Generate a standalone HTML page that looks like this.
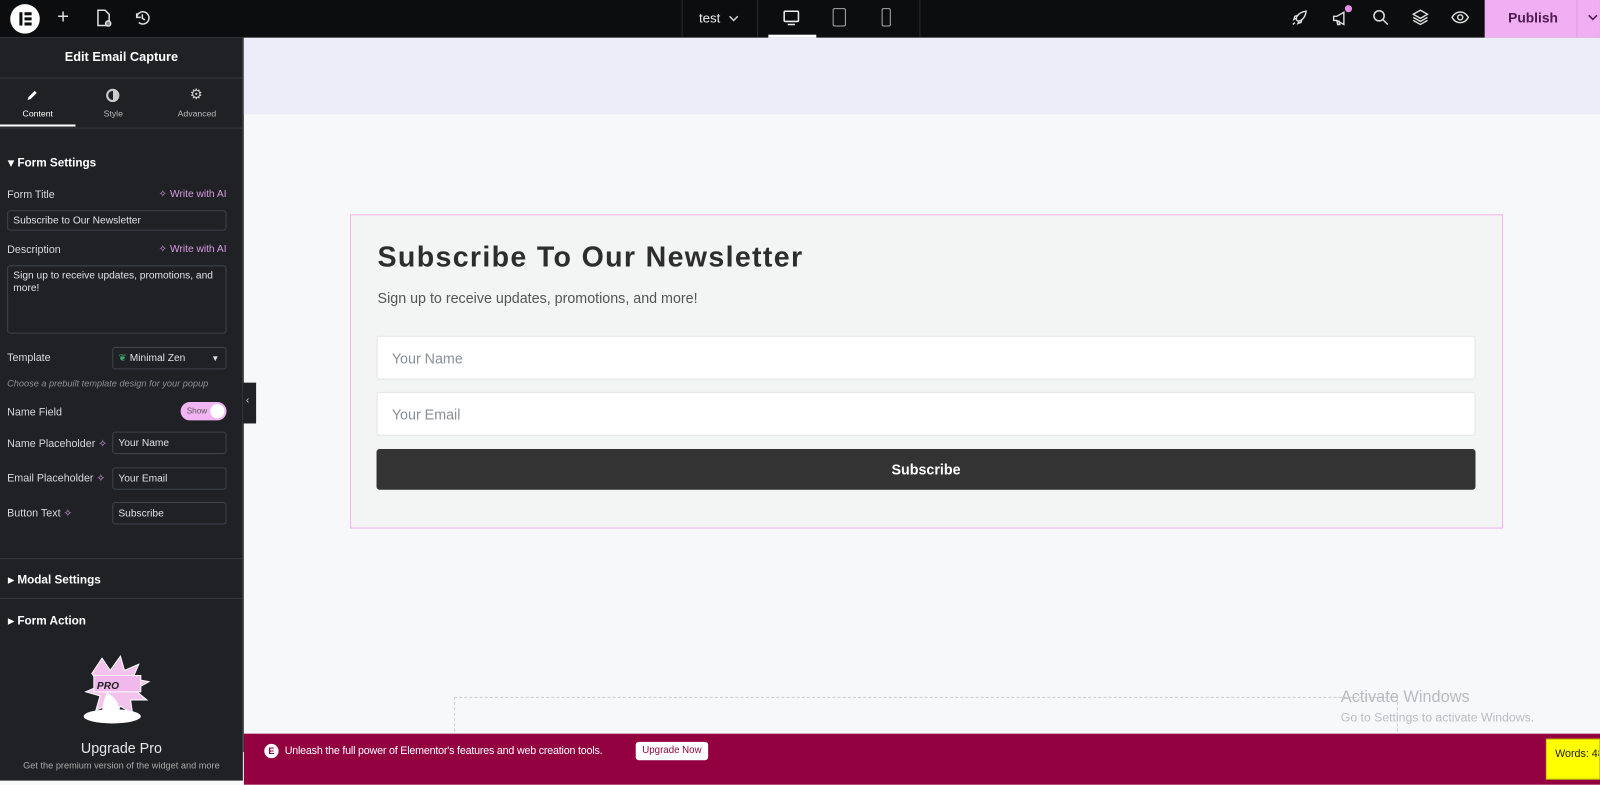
<!DOCTYPE html>
<html><head><meta charset="utf-8"><style>
*{box-sizing:border-box;margin:0;padding:0}
body{width:1600px;height:765px;overflow:hidden;font-family:"Liberation Sans",sans-serif;background:#f7f8f9;position:relative}
#w{position:absolute;left:0;top:0;width:1568px;height:750px;transform:scale(1.0204);transform-origin:0 0}
.abs{position:absolute}
.top{left:0;top:0;width:1568px;height:37px;background:#0c0d0e}
.side{left:0;top:37px;width:238px;height:728px;background:#1f2124;color:#e0e1e3;font-size:11px}
.lbl{position:absolute;left:7px;font-size:10.5px;color:#d5d8dc}
.inp{position:absolute;border:1px solid #3f444b;border-radius:3px;background:#1f2124;color:#e0e1e3;font-size:10px;padding-left:5px;display:flex;align-items:center}
.ai{position:absolute;right:16px;color:#d99ae6;font-size:10px}
.sec{position:absolute;left:8px;font-weight:bold;font-size:11.5px;color:#fff}
.line{position:absolute;left:0;width:238px;height:1px;background:#35383d}
.field{position:absolute;background:#fff;border:1px solid #e2e4e7;border-radius:3px;color:#8a8f95;font-size:14px;padding-left:14px;display:flex;align-items:center}
</style></head><body><div id="w">
<div class="abs top">
 <div class="abs" style="left:10px;top:4px;width:29px;height:29px;border-radius:50%;background:#fff"></div>
 <div class="abs" style="left:19px;top:12px;width:3px;height:13px;background:#0c0d0e"></div>
 <div class="abs" style="left:24px;top:12px;width:7px;height:3px;background:#0c0d0e"></div>
 <div class="abs" style="left:24px;top:17px;width:7px;height:3px;background:#0c0d0e"></div>
 <div class="abs" style="left:24px;top:22px;width:7px;height:3px;background:#0c0d0e"></div>
 <div class="abs" style="left:56px;top:6px;color:#ddd;font-size:20px">+</div>
 <svg class="abs" style="left:94px;top:9px" width="16" height="18" viewBox="0 0 16 18" fill="none" stroke="#ddd" stroke-width="1.5"><path d="M2 1h7l4 4v11H2z"/><circle cx="12" cy="14" r="2.5" fill="#888"/></svg>
 <svg class="abs" style="left:131px;top:9px" width="17" height="17" viewBox="0 0 17 17" fill="none" stroke="#ddd" stroke-width="1.5"><path d="M3 8.5a6 6 0 1 1 2 4.5M3 4v4h4M8.5 5v4l2.5 1.5"/></svg>
 <div class="abs" style="left:668px;top:0;width:1px;height:37px;background:#2a2c30"></div>
 <div class="abs" style="left:742px;top:0;width:1px;height:37px;background:#2a2c30"></div>
 <div class="abs" style="left:901px;top:0;width:1px;height:37px;background:#2a2c30"></div>
 <div class="abs" style="left:685px;top:10px;color:#eee;font-size:13px">test</div>
 <svg class="abs" style="left:713px;top:14px" width="12" height="8" viewBox="0 0 12 8" fill="none" stroke="#ccc" stroke-width="1.5"><path d="M2 2l4 4 4-4"/></svg>
 <svg class="abs" style="left:767px;top:9px" width="17" height="17" viewBox="0 0 17 17" fill="none" stroke="#eee" stroke-width="1.5"><rect x="1.5" y="2" width="14" height="10" rx="1"/><path d="M5 15h7"/></svg>
 <div class="abs" style="left:753px;top:34px;width:47px;height:3px;background:#fff"></div>
 <div class="abs" style="left:816px;top:8px;width:13px;height:18px;border:1.5px solid #aaa;border-radius:2px"></div>
 <div class="abs" style="left:864px;top:8px;width:9px;height:18px;border:1.5px solid #aaa;border-radius:2px"></div>
 <svg class="abs" style="left:1265px;top:9px" width="17" height="17" viewBox="0 0 17 17" fill="none" stroke="#ddd" stroke-width="1.4"><path d="M4 13l-2 2M6 11c-2-2 1-8 9-9-1 8-7 11-9 9zM5 9l-2 1 1-3 3-1M8 12l-1 2 3-1 1-3"/></svg>
 <svg class="abs" style="left:1305px;top:9px" width="18" height="18" viewBox="0 0 18 18" fill="none" stroke="#ddd" stroke-width="1.4"><path d="M2 7h3l7-4v12l-7-4H2zM5 11l1 4h2l-1-4"/></svg>
 <div class="abs" style="left:1318px;top:5px;width:7px;height:7px;border-radius:50%;background:#e98ee8"></div>
 <svg class="abs" style="left:1345px;top:9px" width="16" height="16" viewBox="0 0 16 16" fill="none" stroke="#ddd" stroke-width="1.5"><circle cx="6.5" cy="6.5" r="5"/><path d="M10 10l5 5"/></svg>
 <svg class="abs" style="left:1384px;top:9px" width="16" height="16" viewBox="0 0 16 16" fill="none" stroke="#ddd" stroke-width="1.4"><path d="M8 1l7 4-7 4-7-4zM1 8l7 4 7-4M1 11l7 4 7-4"/></svg>
 <svg class="abs" style="left:1422px;top:10px" width="18" height="14" viewBox="0 0 18 14" fill="none" stroke="#ddd" stroke-width="1.4"><path d="M1 7c4-7 12-7 16 0-4 7-12 7-16 0z"/><circle cx="9" cy="7" r="2.5"/></svg>
 <div class="abs" style="left:1455px;top:0;width:113px;height:37px;background:#f0aef3"></div>
 <div class="abs" style="left:1478px;top:10px;font-weight:bold;font-size:13.5px;color:#4b1a4e">Publish</div>
 <div class="abs" style="left:1545px;top:0;width:1px;height:37px;background:#dc9ce0"></div>
 <svg class="abs" style="left:1555px;top:13px" width="12" height="8" viewBox="0 0 12 8" fill="none" stroke="#4b1a4e" stroke-width="1.5"><path d="M2 2l4 4 4-4"/></svg>
</div>

<div class="abs side">
 <div class="abs" style="left:0;top:12px;width:238px;text-align:center;font-weight:bold;font-size:12.5px;color:#fff">Edit Email Capture</div>
 <div class="line" style="top:39px"></div>
 <div class="abs" style="left:0;top:69px;width:74px;text-align:center;font-size:8.5px;color:#fff">Content</div>
 <svg class="abs" style="left:25px;top:50px" width="13" height="13" viewBox="0 0 13 13"><path d="M2 11l1-3 6-6 2 2-6 6z" fill="#fff"/></svg>
 <div class="abs" style="left:0;top:85px;width:74px;height:2px;background:#fff"></div>
 <div class="abs" style="left:104px;top:50px;width:13px;height:13px;border-radius:50%;border:2px solid #ccc;background:linear-gradient(90deg,#1f2124 50%,#ccc 50%)"></div>
 <div class="abs" style="left:80px;top:69px;width:62px;text-align:center;font-size:8.5px;color:#bbb">Style</div>
 <div class="abs" style="left:186px;top:47px;font-size:14px;color:#ccc">⚙</div>
 <div class="abs" style="left:160px;top:69px;width:66px;text-align:center;font-size:8.5px;color:#bbb">Advanced</div>
 <div class="line" style="top:88px"></div>
 <div class="sec" style="top:115px">▾ Form Settings</div>
 <div class="lbl" style="top:148px">Form Title</div><div class="ai" style="top:148px">✧ Write with AI</div>
 <div class="inp" style="left:7px;top:169px;width:215px;height:20px">Subscribe to Our Newsletter</div>
 <div class="lbl" style="top:202px">Description</div><div class="ai" style="top:202px">✧ Write with AI</div>
 <div class="inp" style="left:7px;top:223px;width:215px;height:67px;align-items:flex-start;padding-top:4px;line-height:12px">Sign up to receive updates, promotions, and more!</div>
 <div class="lbl" style="top:308px">Template</div>
 <div class="inp" style="left:110px;top:303px;width:112px;height:22px"><span style="color:#3fa96c">❦</span>&nbsp;Minimal Zen<span style="position:absolute;right:6px;font-size:8px">▼</span></div>
 <div class="abs" style="left:7px;top:334px;font-size:9px;font-style:italic;color:#8c9096">Choose a prebuilt template design for your popup</div>
 <div class="lbl" style="top:361px">Name Field</div>
 <div class="abs" style="left:177px;top:357px;width:45px;height:18px;border-radius:9px;background:#f2b4f2;font-size:8px;color:#555;padding:4px 0 0 6px">Show</div>
 <div class="abs" style="left:206px;top:359px;width:14px;height:14px;border-radius:50%;background:#fff"></div>
 <div class="lbl" style="top:392px">Name Placeholder <span style="color:#d99ae6">✧</span></div>
 <div class="inp" style="left:110px;top:386px;width:112px;height:22px">Your Name</div>
 <div class="lbl" style="top:426px">Email Placeholder <span style="color:#d99ae6">✧</span></div>
 <div class="inp" style="left:110px;top:421px;width:112px;height:22px">Your Email</div>
 <div class="lbl" style="top:460px">Button Text <span style="color:#d99ae6">✧</span></div>
 <div class="inp" style="left:110px;top:455px;width:112px;height:22px">Subscribe</div>
 <div class="line" style="top:510px"></div>
 <div class="sec" style="top:524px">▸ Modal Settings</div>
 <div class="line" style="top:549px"></div>
 <div class="sec" style="top:564px">▸ Form Action</div>
 <svg class="abs" style="left:70px;top:603px" width="90" height="70" viewBox="0 0 90 70"><path d="M30 5l8 12 10-14 4 14 14-6-6 14 16 3-14 8 12 10-16 0 2 14-12-8-6 12-4-14-14 6 4-14-14-4 14-6-8-12z" fill="#f3c3ee" stroke="#fff"/><rect x="22" y="22" width="46" height="16" fill="#f0b8ec" stroke="#fff"/><text x="25" y="35" font-size="10" font-weight="bold" font-style="italic" fill="#222" font-family="Liberation Sans">PRO</text><ellipse cx="40" cy="62" rx="28" ry="7" fill="#fff"/><path d="M35 38c5 5 15 10 10 22H30c0-8 2-15 5-22z" fill="#fff"/></svg>
 <div class="abs" style="left:0;top:688px;width:238px;text-align:center;font-size:14px;color:#e6e6e6">Upgrade Pro</div>
 <div class="abs" style="left:0;top:708px;width:238px;text-align:center;font-size:9px;color:#aaa">Get the premium version of the widget and more</div>
</div>
<div class="abs" style="left:238px;top:37px;width:1px;height:700px;background:#3a3d42"></div>
<div class="abs" style="left:238px;top:375px;width:13px;height:40px;background:#1f2124;color:#ccc;font-size:10px;padding:12px 0 0 3px">‹</div>

<div class="abs" style="left:239px;top:37px;width:1329px;height:75px;background:#edecf9"></div>
<div class="abs" style="left:343px;top:210px;width:1130px;height:308px;border:1.5px solid #f0b4ee;background:#f3f4f4"></div>
<div class="abs" style="left:370px;top:236px;font-size:28px;font-weight:bold;color:#2d2d2d;letter-spacing:1.3px">Subscribe To Our Newsletter</div>
<div class="abs" style="left:370px;top:284px;font-size:14px;color:#555">Sign up to receive updates, promotions, and more!</div>
<div class="field" style="left:369px;top:329px;width:1077px;height:43px">Your Name</div>
<div class="field" style="left:369px;top:384px;width:1077px;height:43px">Your Email</div>
<div class="abs" style="left:369px;top:440px;width:1077px;height:40px;background:#333;border-radius:3px;color:#fff;font-weight:bold;font-size:14px;text-align:center;line-height:40px">Subscribe</div>

<div class="abs" style="left:445px;top:683px;width:925px;height:60px;border:1px dashed #cfd2d6;border-bottom:none"></div>
<div class="abs" style="left:1314px;top:675px;font-size:16px;color:#b8bcc0">Activate Windows</div>
<div class="abs" style="left:1314px;top:696px;font-size:12px;color:#b8bcc0">Go to Settings to activate Windows.</div>

<div class="abs" style="left:239px;top:719px;width:1329px;height:50px;background:#93003f"></div>
<div class="abs" style="left:259px;top:729px;width:14px;height:14px;border-radius:50%;background:#fff;color:#93003f;font-size:9px;font-weight:bold;text-align:center;line-height:14px">E</div>
<div class="abs" style="left:279px;top:730px;color:#fff;font-size:10.5px;letter-spacing:-0.2px">Unleash the full power of Elementor's features and web creation tools.</div>
<div class="abs" style="left:623px;top:727px;width:71px;height:18px;background:#fff;border-radius:3px;color:#93003f;font-size:9.5px;text-align:center;line-height:18px">Upgrade Now</div>
<div class="abs" style="left:1515px;top:724px;width:53px;height:40px;background:#ffff00;border:1px solid #cc0;font-size:10.5px;padding:8px 0 0 8px;color:#222;white-space:nowrap;overflow:hidden">Words: 48</div>
</div></body></html>
